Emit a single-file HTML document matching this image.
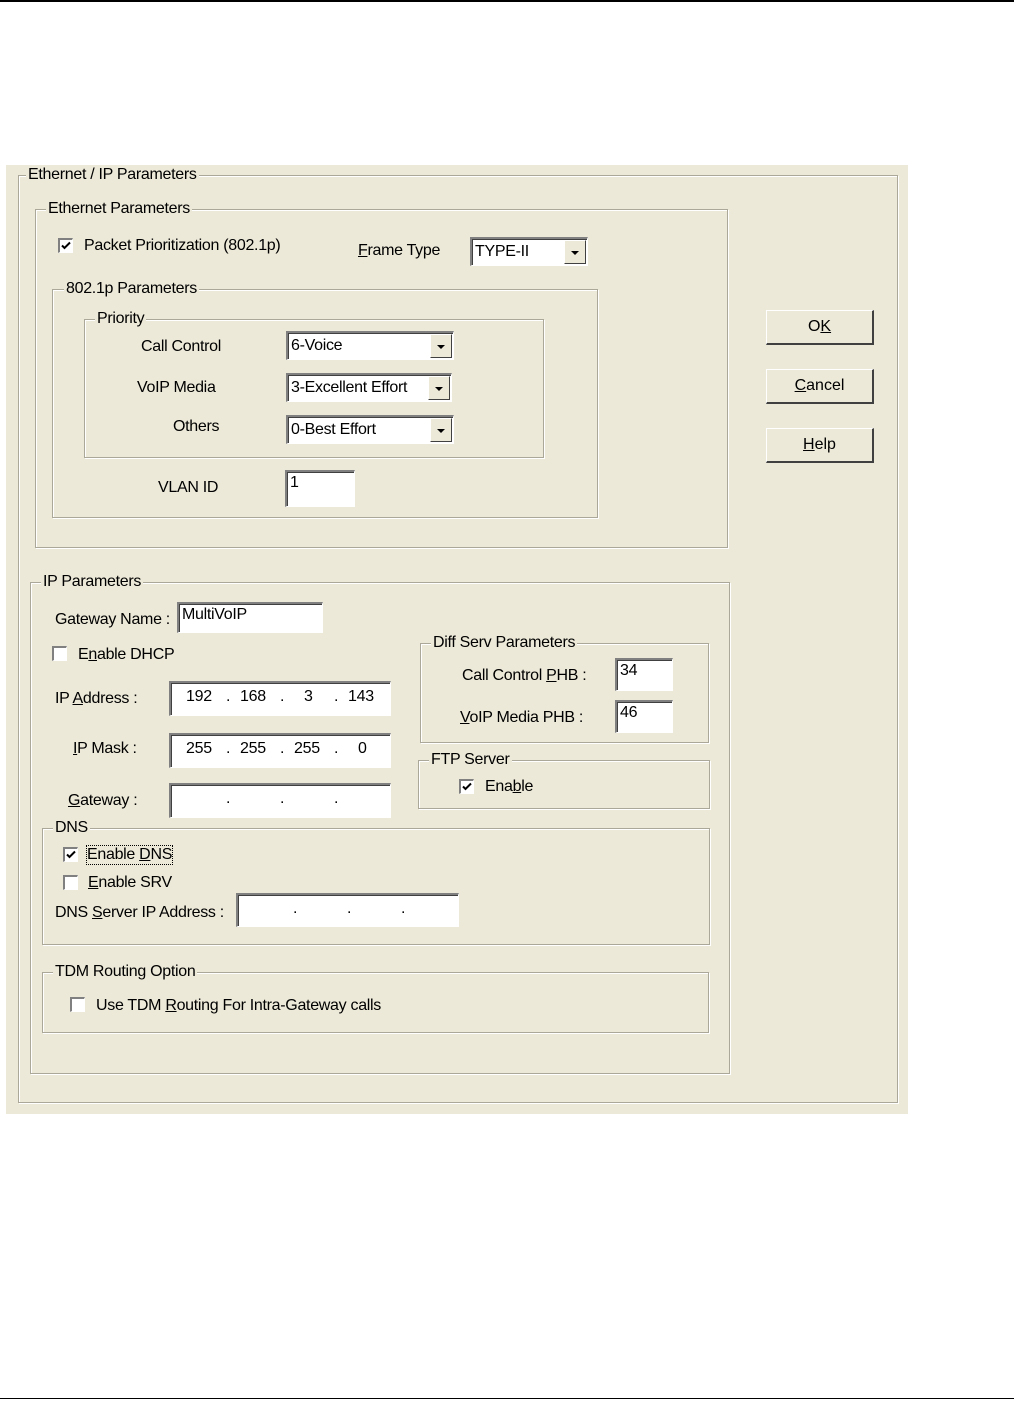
<!DOCTYPE html>
<html><head><meta charset="utf-8"><style>
*{box-sizing:border-box;margin:0;padding:0}
body{width:1014px;height:1404px;background:#fff;position:relative;font-family:"Liberation Sans",sans-serif;font-size:16px;color:#000;overflow:hidden}
.a{position:absolute}
.dlg{position:absolute;left:6px;top:165px;width:902px;height:949px;background:#ECE9D8}
.g{position:absolute;border:1px solid #ACA899;box-shadow:inset 1px 1px 0 #fff,1px 1px 0 #fff}
.gl{position:absolute;background:#ECE9D8;padding:0 2px;line-height:18px;white-space:nowrap;letter-spacing:-0.3px}
.t{position:absolute;white-space:nowrap;line-height:18px;letter-spacing:-0.3px}
.in{position:absolute;background:#fff;border-top:2px solid #808080;border-left:2px solid #808080;border-right:1px solid #fff;border-bottom:1px solid #fff;box-shadow:inset 1px 1px 0 #404040;padding:2px 3px;line-height:18px;white-space:nowrap;letter-spacing:-0.3px}
.cmb{padding-top:4px}
.dd{position:absolute;right:1px;top:1px;bottom:1px;width:22px;background:#ECE9D8;border-top:1px solid #fff;border-left:1px solid #fff;border-right:1px solid #404040;border-bottom:1px solid #404040}
.dd:after{content:"";position:absolute;left:6px;top:10px;border-left:4px solid transparent;border-right:4px solid transparent;border-top:4px solid #000}
.cb{position:absolute;width:15px;height:15px;background:#fff;border-top:2px solid #808080;border-left:2px solid #808080;border-right:1px solid #fff;border-bottom:1px solid #fff}
.cb svg{position:absolute;left:1px;top:1px}
.btn{position:absolute;width:108px;height:35px;background:#ECE9D8;border-top:1px solid #fff;border-left:1px solid #fff;border-right:2px solid #404040;border-bottom:2px solid #404040;text-align:center;line-height:31px}
.p{position:absolute;top:5px;line-height:18px}
u{text-decoration:underline}
</style></head><body>
<div class="a" style="left:0;top:0;width:1014px;height:2px;background:#000"></div>
<div class="a" style="left:0;top:1398px;width:1014px;height:1px;background:#000"></div>
<div class="dlg"></div>
<div class="g" style="left:18px;top:175px;width:880px;height:928px"></div>
<div class="gl" style="left:26px;top:166px">Ethernet / IP Parameters</div>

<div class="g" style="left:35px;top:209px;width:693px;height:339px"></div>
<div class="gl" style="left:46px;top:200px">Ethernet Parameters</div>
<div class="cb" style="left:58px;top:238px"><svg width="10" height="10" viewBox="0 0 10 10"><path d="M1 4.5L3.5 7L9 1.5" stroke="#000" stroke-width="2" fill="none"/></svg></div>
<div class="t" style="left:84px;top:237px">Packet Prioritization (802.1p)</div>
<div class="t" style="left:358px;top:242px"><u>F</u>rame Type</div>
<div class="in cmb" style="left:470px;top:237px;width:118px;height:29px">TYPE-II<div class="dd"></div></div>

<div class="g" style="left:52px;top:289px;width:546px;height:229px"></div>
<div class="gl" style="left:64px;top:280px">802.1p Parameters</div>
<div class="g" style="left:84px;top:319px;width:460px;height:139px"></div>
<div class="gl" style="left:95px;top:310px">Priority</div>
<div class="t" style="left:141px;top:338px">Call Control</div>
<div class="in cmb" style="left:286px;top:331px;width:168px;height:29px">6-Voice<div class="dd"></div></div>
<div class="t" style="left:137px;top:379px">VoIP Media</div>
<div class="in cmb" style="left:286px;top:373px;width:166px;height:29px">3-Excellent Effort<div class="dd"></div></div>
<div class="t" style="left:173px;top:418px">Others</div>
<div class="in cmb" style="left:286px;top:415px;width:168px;height:29px">0-Best Effort<div class="dd"></div></div>
<div class="t" style="left:158px;top:479px">VLAN ID</div>
<div class="in" style="left:285px;top:470px;width:70px;height:37px">1</div>

<div class="btn" style="left:766px;top:310px">O<u>K</u></div>
<div class="btn" style="left:766px;top:369px"><u>C</u>ancel</div>
<div class="btn" style="left:766px;top:428px"><u>H</u>elp</div>

<div class="g" style="left:30px;top:582px;width:700px;height:492px"></div>
<div class="gl" style="left:41px;top:573px">IP Parameters</div>
<div class="t" style="left:55px;top:611px">Gateway Name :</div>
<div class="in" style="left:177px;top:602px;width:146px;height:31px">MultiVoIP</div>
<div class="cb" style="left:52px;top:646px"></div>
<div class="t" style="left:78px;top:646px">E<u>n</u>able DHCP</div>

<div class="g" style="left:420px;top:643px;width:289px;height:100px"></div>
<div class="gl" style="left:431px;top:634px">Diff Serv Parameters</div>
<div class="t" style="left:462px;top:667px">Call Control <u>P</u>HB :</div>
<div class="in" style="left:615px;top:658px;width:58px;height:33px">34</div>
<div class="t" style="left:460px;top:709px"><u>V</u>oIP Media PHB :</div>
<div class="in" style="left:615px;top:700px;width:58px;height:33px">46</div>

<div class="g" style="left:418px;top:760px;width:292px;height:49px"></div>
<div class="gl" style="left:429px;top:751px">FTP Server</div>
<div class="cb" style="left:459px;top:779px"><svg width="10" height="10" viewBox="0 0 10 10"><path d="M1 4.5L3.5 7L9 1.5" stroke="#000" stroke-width="2" fill="none"/></svg></div>
<div class="t" style="left:485px;top:778px">Ena<u>b</u>le</div>

<div class="t" style="left:55px;top:690px">IP <u>A</u>ddress :</div>
<div class="in" style="left:169px;top:681px;width:222px;height:35px"><span class="p" style="left:15px">192</span><span class="p" style="left:55px">.</span><span class="p" style="left:69px">168</span><span class="p" style="left:109px">.</span><span class="p" style="left:133px">3</span><span class="p" style="left:163px">.</span><span class="p" style="left:177px">143</span></div>
<div class="t" style="left:73px;top:740px"><u>I</u>P Mask :</div>
<div class="in" style="left:169px;top:733px;width:222px;height:35px"><span class="p" style="left:15px">255</span><span class="p" style="left:55px">.</span><span class="p" style="left:69px">255</span><span class="p" style="left:109px">.</span><span class="p" style="left:123px">255</span><span class="p" style="left:163px">.</span><span class="p" style="left:187px">0</span></div>
<div class="t" style="left:68px;top:792px"><u>G</u>ateway :</div>
<div class="in" style="left:169px;top:783px;width:222px;height:35px"><span class="p" style="left:55px">.</span><span class="p" style="left:109px">.</span><span class="p" style="left:163px">.</span></div>

<div class="g" style="left:42px;top:828px;width:668px;height:117px"></div>
<div class="gl" style="left:53px;top:819px">DNS</div>
<div class="cb" style="left:63px;top:847px"><svg width="10" height="10" viewBox="0 0 10 10"><path d="M1 4.5L3.5 7L9 1.5" stroke="#000" stroke-width="2" fill="none"/></svg></div>
<div class="t" style="left:87px;top:846px;outline:1px dotted #000">Enable <u>D</u>NS</div>
<div class="cb" style="left:63px;top:875px"></div>
<div class="t" style="left:88px;top:874px"><u>E</u>nable SRV</div>
<div class="t" style="left:55px;top:904px">DNS <u>S</u>erver IP Address :</div>
<div class="in" style="left:236px;top:893px;width:223px;height:34px"><span class="p" style="left:55px">.</span><span class="p" style="left:109px">.</span><span class="p" style="left:163px">.</span></div>

<div class="g" style="left:42px;top:972px;width:667px;height:61px"></div>
<div class="gl" style="left:53px;top:963px">TDM Routing Option</div>
<div class="cb" style="left:70px;top:997px"></div>
<div class="t" style="left:96px;top:997px">Use TDM <u>R</u>outing For Intra-Gateway calls</div>
</body></html>
